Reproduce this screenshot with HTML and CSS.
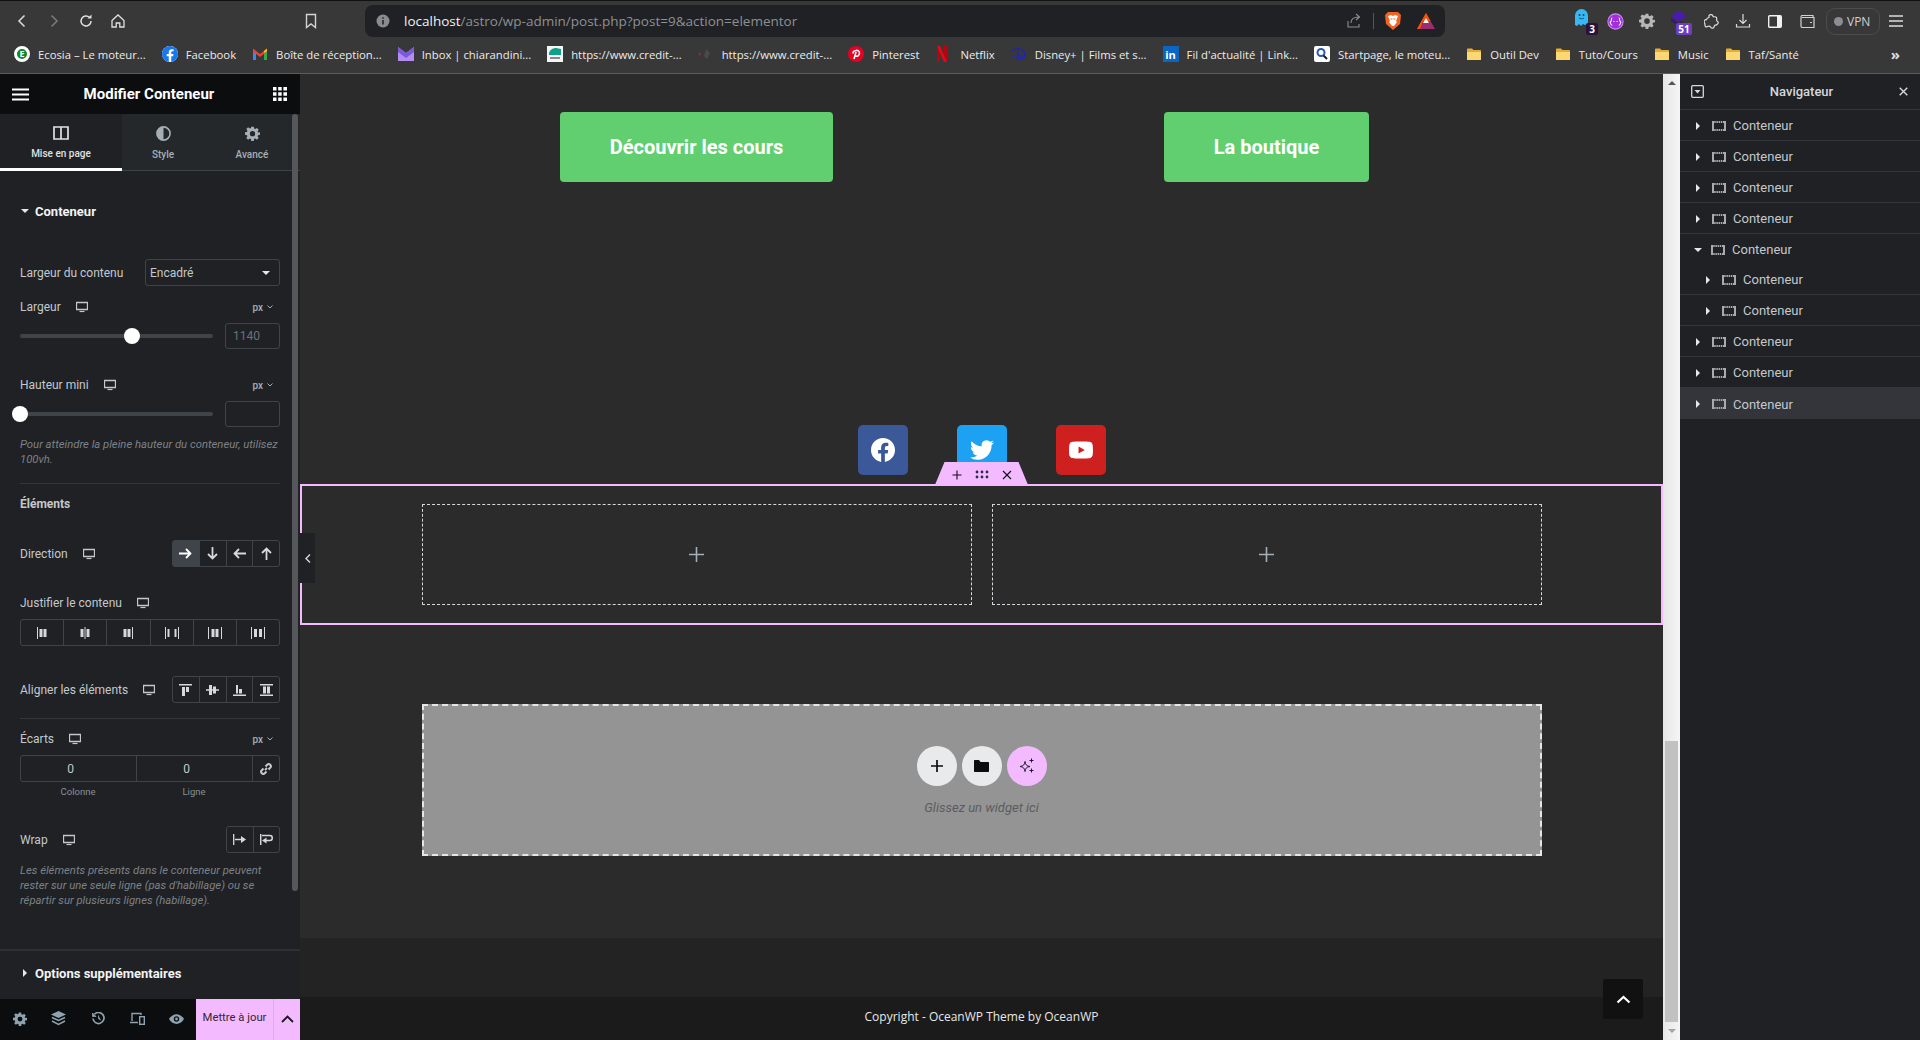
FILE: index.html
```html
<!DOCTYPE html>
<html lang="fr">
<head>
  <meta charset="utf-8">
  <title>Elementor | Modifier Conteneur</title>
  <link rel="stylesheet" href="styles.css">
</head>
<body>
  <svg class="defs" width="0" height="0">
    <symbol id="mon" viewBox="0 0 12 12"><path d="M.5 1.500h11v7h-11z" fill="none" stroke="currentColor" stroke-width="1.300"/><path d="M3.500 10.500h5" stroke="currentColor" stroke-width="1.200"/></symbol>
    <symbol id="box" viewBox="0 0 14 10"><path d="M0 0h2v10H0zM12 0h2v10h-2z" fill="currentColor"/><path d="M0 1h14M0 9h14" stroke="currentColor" stroke-width="2" stroke-dasharray="1.500 .7"/></symbol>
    <symbol id="folder" viewBox="0 0 16 16"><path d="M1 3.500c0-.6.400-1 1-1h4l1.500 1.500H14c.6 0 1 .4 1 1V13c0 .6-.4 1-1 1H2c-.6 0-1-.4-1-1z" fill="#e3ad3c"/><path d="M1 6h14v7c0 .6-.4 1-1 1H2c-.6 0-1-.4-1-1z" fill="#fbd872"/></symbol>
    <symbol id="gear" viewBox="0 0 24 24"><path fill="currentColor" fill-rule="evenodd" d="M10 1h4l.6 3.100 1.800.8 2.700-1.800 2.800 2.800-1.800 2.700.8 1.800L24 10v4l-3.100.6-.8 1.800 1.800 2.700-2.800 2.800-2.700-1.800-1.800.8L14 24h-4l-.6-3.100-1.800-.8-2.700 1.800-2.800-2.800 1.800-2.700-.8-1.800L0 14v-4l3.100-.6.8-1.800L2.100 4.900l2.800-2.800 2.700 1.800 1.800-.8zM12 8a4.200 4.200 0 1 0 0 8.400A4.200 4.200 0 0 0 12 8z"/></symbol>
  </svg>

  <div class="app">
    <header class="toolbar">
      <div class="tb-left">
        <span class="tb-btn"><svg width="16" height="16" viewBox="0 0 16 16"><path d="M10.500 2.500 5 8l5.500 5.500" fill="none" stroke="#dcdcdc" stroke-width="1.500"/></svg></span>
        <span class="tb-btn"><svg width="16" height="16" viewBox="0 0 16 16"><path d="M5.500 2.500 11 8l-5.500 5.500" fill="none" stroke="#7b7b7b" stroke-width="1.500"/></svg></span>
        <span class="tb-btn"><svg width="16" height="16" viewBox="0 0 16 16"><path d="M13 8a5 5 0 1 1-1.600-3.700" fill="none" stroke="#e0e0e0" stroke-width="1.500"/><path d="M13.500 1.500v4h-4z" fill="#e0e0e0"/></svg></span>
        <span class="tb-btn"><svg width="16" height="16" viewBox="0 0 16 16"><path d="M2 7.500 8 2l6 5.500V14H9.800v-4H6.200v4H2z" fill="none" stroke="#e0e0e0" stroke-width="1.300"/></svg></span>
        <span class="tb-btn tb-mark"><svg width="16" height="16" viewBox="0 0 16 16"><path d="M3.500 1.500h9v13L8 11l-4.500 3.500z" fill="none" stroke="#d4d4d4" stroke-width="1.400"/></svg></span>
      </div>
      <div class="urlbar">
        <svg class="url-info" width="14" height="14" viewBox="0 0 14 14"><circle cx="7" cy="7" r="6.500" fill="#8a8b8d"/><path d="M7 6v4.500M7 3.300v1.500" stroke="#202124" stroke-width="1.500"/></svg>
        <span class="url-text"><b>localhost</b>/astro/wp-admin/post.php?post=9&amp;action=elementor</span>
        <svg width="16" height="16" viewBox="0 0 16 16"><path d="M2 8v6h11v-3M5 10c0-4 3-6 8-6M10 1l3.500 3L10 7" fill="none" stroke="#8e8e8e" stroke-width="1.100"/></svg>
        <i class="url-sep"></i>
        <svg class="url-brave" width="18" height="20" viewBox="0 0 18 20"><path d="M4 1h10l3 3-1 9-7 6-7-6-1-9z" fill="#f1641f"/><path d="M4 5l3-1 2 1 2-1 3 1-2 5 1 1-3 4H8l-3-4 1-1z" fill="#fff"/><path d="M6.500 8h2M9.500 8h2" stroke="#f1641f"/></svg>
        <svg class="url-bat" width="18" height="16" viewBox="0 0 18 16"><path d="M9 0l9 16H0z" fill="#9b2d6e"/><path d="M9 0 4.500 8h9z" fill="#ff5000"/><path d="M9 5l3 5H6z" fill="#fff"/><path d="M0 16l4.500-8H6L3 16z" fill="#ff5000"/></svg>
      </div>
      <div class="tb-right">
        <span class="tb-btn ext">
          <svg class="ext-ghost" width="13" height="18" viewBox="0 0 13 18"><path d="M0 6.500a6.500 6.500 0 0 1 13 0V15l-3 1-2-1-2 2-2-2-2 2-2-1z" fill="#35b8f4"/><circle cx="4.500" cy="6" r="1" fill="#143a55"/><circle cx="8.500" cy="6" r="1" fill="#143a55"/><path d="M4 9c1.500 1 3.500 1 5 0" fill="none" stroke="#143a55" stroke-width=".8"/></svg>
          <em class="badge badge-dark">3</em>
        </span>
        <span class="tb-btn"><svg width="17" height="17" viewBox="0 0 16 16"><circle cx="8" cy="8" r="7.200" fill="#a32ee0" stroke="#c98bf0"/><path d="M5 4.500C3.500 4.500 4.500 8 3.500 8s0 3.500 1.500 3.500M11 4.500c1.500 0 .5 3.500 1.500 3.500s0 3.500-1.500 3.500M6 8h1M9 8h1" fill="none" stroke="#fff"/></svg></span>
        <span class="tb-btn gear-grey"><svg width="16" height="16"><use href="#gear"/></svg></span>
        <span class="tb-btn ext">
          <svg class="ext-stack" width="16" height="15" viewBox="0 0 16 15"><path d="M8 0l8 5-8 5-8-5z" fill="#4b19b5"/><path d="M0 7l8 5 3-2v4l-3 1-8-5z" fill="#37138c"/></svg>
          <em class="badge badge-violet">51</em>
        </span>
        <span class="tb-btn"><svg width="15" height="15" viewBox="0 0 15 15"><path d="M5 1.500c1-1.500 4-1 4 1 0 .8 2.800-.5 3.500 1s-.5 3 .5 3.500 2 1.500.5 3.200-2.500.5-3 1.500-.5 3-2.500 2.500-1-2-3-2-2.500 1.500-3.500.3-.3-2.500-.8-3.300-1.500-1.700 0-3 1.700.3 2-1 1.300-1.500 2.300-1.700z" fill="none" stroke="#dcdcdc" stroke-width="1.200"/></svg></span>
        <span class="tb-btn"><svg width="16" height="16" viewBox="0 0 16 16"><path d="M8 1v9M4.500 7 8 10.500 11.500 7M1.500 11v3h13v-3" fill="none" stroke="#dcdcdc" stroke-width="1.200"/></svg></span>
        <span class="tb-btn"><svg width="14" height="13" viewBox="0 0 14 13"><rect x=".7" y=".7" width="12.600" height="11.600" rx="1" fill="none" stroke="#f0f0f0" stroke-width="1.400"/><rect x="9" y="1" width="4" height="11" fill="#f0f0f0"/></svg></span>
        <span class="tb-btn"><svg width="15" height="13" viewBox="0 0 15 13"><path d="M13 2.500v-2H2.500C1.500.5 1 1 1 2v9c0 .8.500 1.500 1.500 1.500H14v-10H2M10 7.500h2" fill="none" stroke="#d2d2d2" stroke-width="1.200"/></svg></span>
        <span class="vpn"><i class="vpn-dot"></i>VPN</span>
        <span class="tb-btn"><svg width="16" height="12" viewBox="0 0 16 12"><path d="M1 1h14M1 6h14M1 11h14" stroke="#dcdcdc" stroke-width="1.300"/></svg></span>
      </div>
    </header>

    <nav class="bookmarks">
      <a class="bm"><span class="fav fav-ecosia">E</span>Ecosia – Le moteur...</a>
      <a class="bm"><svg class="fav" viewBox="0 0 24 24"><circle cx="12" cy="12" r="12" fill="#fff"/><path fill="#1877f2" d="M24 12.073c0-6.627-5.373-12-12-12s-12 5.373-12 12c0 5.990 4.388 10.954 10.125 11.854v-8.385H7.078v-3.470h3.047V9.430c0-3.007 1.792-4.669 4.533-4.669 1.312 0 2.686.235 2.686.235v2.953H15.830c-1.491 0-1.956.925-1.956 1.874v2.250h3.328l-.532 3.470h-2.796v8.385C19.612 23.027 24 18.062 24 12.073z"/></svg>Facebook</a>
      <a class="bm"><svg class="fav" viewBox="0 0 16 16"><path d="M1 3v11h3V7z" fill="#4285f4"/><path d="M15 3v11h-3V7z" fill="#34a853"/><path d="M1 2.500 8 8l7-5.500v3L8 11 1 5.500z" fill="#ea4335"/><path d="M12 5v2l3-1.500v-3z" fill="#fbbc04"/></svg>Boîte de réception...</a>
      <a class="bm"><svg class="fav" viewBox="0 0 16 16"><path d="M0 1l8 6 8-6v14H0z" fill="#b48cf2"/><path d="M0 1l8 6 8-6v5l-8 6-8-6z" fill="#7a5ad8"/></svg>Inbox | chiarandini...</a>
      <a class="bm"><svg class="fav" viewBox="0 0 16 16"><rect width="16" height="16" fill="#f5f5f5"/><path d="M2 8c0-4 4-6 7-6l5 1v6H2z" fill="#0fa08a"/><rect x="3" y="11" width="10" height="2" fill="#8a8a8a"/></svg>https://www.credit-...</a>
      <a class="bm"><svg class="fav" viewBox="0 0 16 16"><path d="M1 6l2 2-2 2z" fill="#c21f2e"/><path d="M8 3l4 4-3 6-3-3z" fill="#4a4a4a"/></svg>https://www.credit-...</a>
      <a class="bm"><svg class="fav" viewBox="0 0 16 16"><circle cx="8" cy="8" r="8" fill="#e60023"/><path d="M6 13 8 6M5 7.500C4.500 4 11.500 3 11.500 7c0 3-3 4-4 2.500" fill="none" stroke="#fff" stroke-width="1.600"/></svg>Pinterest</a>
      <a class="bm bm-netflix"><svg class="fav-nf" viewBox="0 0 10 16"><path d="M0 0h3v16l-3 .3zM7 0h3v16.300L7 16z" fill="#b20710"/><path d="M0 0h3l7 16.300H7z" fill="#e50914"/></svg>Netflix</a>
      <a class="bm"><svg class="fav" viewBox="0 0 16 16"><path d="M1 5c6-5 13-1 13 4 0 3-4 5-8 3M7 5v9M1 10h14" fill="none" stroke="#1c22c4" stroke-width="1.200"/></svg>Disney+ | Films et s...</a>
      <a class="bm"><span class="fav fav-in">in</span>Fil d'actualité | Link...</a>
      <a class="bm"><svg class="fav" viewBox="0 0 16 16"><rect width="16" height="16" rx="2" fill="#fff"/><circle cx="7" cy="6.500" r="3.500" fill="none" stroke="#2959a8" stroke-width="2"/><path d="M9.500 9.500 13 13" stroke="#1a1a1a" stroke-width="2"/></svg>Startpage, le moteu...</a>
      <a class="bm"><svg class="fav"><use href="#folder"/></svg>Outil Dev</a>
      <a class="bm"><svg class="fav"><use href="#folder"/></svg>Tuto/Cours</a>
      <a class="bm"><svg class="fav"><use href="#folder"/></svg>Music</a>
      <a class="bm"><svg class="fav"><use href="#folder"/></svg>Taf/Santé</a>
      <span class="bm-more">»</span>
    </nav>

    <div class="workspace">
      <aside class="panel">
        <div class="panel-head">
          <svg width="17" height="13" viewBox="0 0 17 13"><path d="M0 1.500h17M0 6.500h17M0 11.500h17" stroke="#fff" stroke-width="2"/></svg>
          <h1>Modifier Conteneur</h1>
          <svg width="14" height="14" viewBox="0 0 14 14" fill="#fff"><path d="M0 0h3.500v3.500H0zM5.200 0h3.500v3.500H5.200zM10.400 0H14v3.500h-3.600zM0 5.200h3.500v3.500H0zM5.200 5.200h3.500v3.500H5.200zM10.400 5.200H14v3.500h-3.600zM0 10.400h3.500V14H0zM5.200 10.400h3.500V14H5.200zM10.400 10.400H14V14h-3.600z"/></svg>
        </div>
        <div class="tabs">
          <div class="tab tab-on">
            <svg width="16" height="14" viewBox="0 0 16 14"><path d="M1 1h14v12H1zM8 1v12" fill="none" stroke="currentColor" stroke-width="1.700"/></svg>
            <span>Mise en page</span>
          </div>
          <div class="tab tab-style">
            <svg width="15" height="15" viewBox="0 0 15 15"><circle cx="7.500" cy="7.500" r="6.600" fill="none" stroke="currentColor" stroke-width="1.600"/><path d="M7.500 1a6.500 6.500 0 0 0 0 13z" fill="currentColor"/></svg>
            <span>Style</span>
          </div>
          <div class="tab tab-adv">
            <svg width="15" height="15"><use href="#gear"/></svg>
            <span>Avancé</span>
          </div>
        </div>

        <div class="panel-body">
          <div class="sec-title"><i class="caret-down"></i>Conteneur</div>

          <div class="row row-width">
            <span class="lab">Largeur du contenu</span>
            <span class="select">Encadré<i class="caret-down"></i></span>
          </div>

          <div class="head head-a">
            <span class="lab">Largeur</span>
            <svg class="mon"><use href="#mon"/></svg>
            <span class="unit">px<svg width="6" height="4" viewBox="0 0 6 4"><path d="M.5.500 3 3 5.500.500" fill="none" stroke="currentColor"/></svg></span>
          </div>
          <div class="slider-row">
            <div class="track"><i class="thumb thumb-mid"></i></div>
            <span class="num">1140</span>
          </div>

          <div class="head head-b">
            <span class="lab">Hauteur mini</span>
            <svg class="mon"><use href="#mon"/></svg>
            <span class="unit">px<svg width="6" height="4" viewBox="0 0 6 4"><path d="M.5.500 3 3 5.500.500" fill="none" stroke="currentColor"/></svg></span>
          </div>
          <div class="slider-row">
            <div class="track"><i class="thumb thumb-start"></i></div>
            <span class="num"></span>
          </div>
          <p class="note">Pour atteindre la pleine hauteur du conteneur, utilisez 100vh.</p>

          <hr class="sep sep-a">
          <div class="sub-title">Éléments</div>

          <div class="row row-dir">
            <span class="lab">Direction</span>
            <svg class="mon"><use href="#mon"/></svg>
            <div class="btns btns-4">
              <span class="on"><svg width="13" height="11" viewBox="0 0 13 11"><path d="M0 5.500h11M7 1l4.500 4.500L7 10" fill="none" stroke="currentColor" stroke-width="1.800"/></svg></span>
              <span><svg width="11" height="13" viewBox="0 0 11 13"><path d="M5.500 0v11M1 7l4.500 4.500L10 7" fill="none" stroke="currentColor" stroke-width="1.800"/></svg></span>
              <span><svg width="13" height="11" viewBox="0 0 13 11"><path d="M13 5.500H2M6 1 1.500 5.500 6 10" fill="none" stroke="currentColor" stroke-width="1.800"/></svg></span>
              <span><svg width="11" height="13" viewBox="0 0 11 13"><path d="M5.500 13V2M1 6l4.500-4.500L10 6" fill="none" stroke="currentColor" stroke-width="1.800"/></svg></span>
            </div>
          </div>

          <div class="head head-c">
            <span class="lab">Justifier le contenu</span>
            <svg class="mon"><use href="#mon"/></svg>
          </div>
          <div class="btns btns-6">
            <span><svg width="14" height="12" viewBox="0 0 14 12" fill="currentColor"><path d="M2 0h1v12H2zM4.500 2h3v8h-3zM8.500 2h3v8h-3z"/></svg></span>
            <span><svg width="14" height="12" viewBox="0 0 14 12" fill="currentColor"><path d="M6.500 0h1v12h-1zM2.500 2h3v8h-3zM8.500 2h3v8h-3z"/></svg></span>
            <span><svg width="14" height="12" viewBox="0 0 14 12" fill="currentColor"><path d="M11 0h1v12h-1zM2.500 2h3v8h-3zM6.500 2h3v8h-3z"/></svg></span>
            <span><svg width="14" height="12" viewBox="0 0 14 12" fill="currentColor"><path d="M0 0h1v12H0zM13 0h1v12h-1zM2.500 2h2v8h-2zM9.500 2h2v8h-2z"/></svg></span>
            <span><svg width="14" height="12" viewBox="0 0 14 12" fill="currentColor"><path d="M0 0h1v12H0zM13 0h1v12h-1zM3.500 2h3v8h-3zM7.500 2h3v8h-3z"/></svg></span>
            <span><svg width="14" height="12" viewBox="0 0 14 12" fill="currentColor"><path d="M0 0h1v12H0zM13 0h1v12h-1zM3 2h3v8H3zM8 2h3v8H8z"/></svg></span>
          </div>

          <div class="row row-align">
            <span class="lab">Aligner les éléments</span>
            <svg class="mon"><use href="#mon"/></svg>
            <div class="btns btns-4">
              <span><svg width="13" height="12" viewBox="0 0 13 12" fill="currentColor"><path d="M0 0h13v1.500H0zM3 3h3v9H3zM7 3h3v5H7z"/></svg></span>
              <span><svg width="13" height="12" viewBox="0 0 13 12" fill="currentColor"><path d="M0 5.300h13v1.400H0zM3 1h3v10H3zM7 2.500h3v7H7z"/></svg></span>
              <span><svg width="13" height="12" viewBox="0 0 13 12" fill="currentColor"><path d="M0 10.500h13V12H0zM3 1h2v8.500H3zM6 5h3v4.500H6z"/></svg></span>
              <span><svg width="13" height="12" viewBox="0 0 13 12" fill="currentColor"><path d="M0 0h13v1.500H0zM0 10.500h13V12H0zM3 2.500h3v7H3zM7 2.500h3v7H7z"/></svg></span>
            </div>
          </div>

          <hr class="sep sep-b">
          <div class="head head-d">
            <span class="lab">Écarts</span>
            <svg class="mon"><use href="#mon"/></svg>
            <span class="unit">px<svg width="6" height="4" viewBox="0 0 6 4"><path d="M.5.500 3 3 5.500.500" fill="none" stroke="currentColor"/></svg></span>
          </div>
          <div class="gaps">
            <span>0</span>
            <span>0</span>
            <span class="link"><svg width="12" height="12" viewBox="0 0 12 12"><path d="M5 7 7 5M3.500 5.500 1.800 7.200a2 2 0 0 0 3 3L6.500 8.500M5.500 3.500l1.700-1.700a2 2 0 0 1 3 3L8.500 6.500" fill="none" stroke="currentColor" stroke-width="2"/></svg></span>
          </div>
          <div class="gap-labs"><span>Colonne</span><span>Ligne</span></div>

          <div class="row row-wrap">
            <span class="lab">Wrap</span>
            <svg class="mon"><use href="#mon"/></svg>
            <div class="btns btns-2">
              <span><svg width="13" height="11" viewBox="0 0 13 11" fill="none" stroke="currentColor" stroke-width="1.300"><path d="M.7 0v11M2 5.500h8"/><path d="M8 2l5 3.500L8 9z" fill="currentColor" stroke="none"/></svg></span>
              <span><svg width="13" height="11" viewBox="0 0 13 11" fill="none" stroke="currentColor" stroke-width="1.500"><path d="M.7 0v11M2 1.500h8c3 0 3 5 0 5H5"/><path d="M6.500 3.500 2 6.500l4.500 3z" fill="currentColor" stroke="none"/></svg></span>
            </div>
          </div>
          <p class="note">Les éléments présents dans le conteneur peuvent rester sur une seule ligne (pas d'habillage) ou se répartir sur plusieurs lignes (habillage).</p>

          <hr class="sep-thick">
          <div class="sec-title sec-more"><i class="caret-right"></i>Options supplémentaires</div>
        </div>

        <div class="panel-foot">
          <div class="foot-icons">
            <span><svg width="14" height="14"><use href="#gear"/></svg></span>
            <span><svg width="15" height="15" viewBox="0 0 15 15"><path d="M7.500 0 15 3.500 7.500 7 0 3.500z" fill="currentColor"/><path d="M1 6.500l6.500 3 6.500-3M1 10l6.500 3.500L14 10" fill="none" stroke="currentColor" stroke-width="1.500"/></svg></span>
            <span><svg width="13" height="13" viewBox="0 0 13 13"><path d="M2.500 2.200A5.500 5.500 0 1 1 1 6.500" fill="none" stroke="currentColor" stroke-width="1.700"/><path d="M.5 1v3.500H4zM6.500 3.500v3.200l2.300 1.300" fill="currentColor" stroke="currentColor" stroke-width=".8"/></svg></span>
            <span><svg width="15" height="13" viewBox="0 0 15 13"><path d="M2 9V1.500h9V3M0 10.500h8" fill="none" stroke="currentColor" stroke-width="1.400"/><rect x="9.700" y="4.700" width="4.600" height="7.600" fill="none" stroke="currentColor" stroke-width="1.400"/></svg></span>
            <span><svg width="15" height="10" viewBox="0 0 15 10"><path d="M0 5c4-6.500 11-6.500 15 0-4 6.500-11 6.500-15 0z" fill="currentColor"/><circle cx="7.500" cy="5" r="2.700" fill="#0c0d0e"/><circle cx="7.500" cy="5" r="1.400" fill="currentColor"/></svg></span>
          </div>
          <span class="save">Mettre à jour</span>
          <span class="save-more"><svg width="13" height="8" viewBox="0 0 13 8"><path d="M1 7l5.500-5.500L12 7" fill="none" stroke="#1b1b1b" stroke-width="1.800"/></svg></span>
        </div>
        <i class="panel-scroll"></i>
      </aside>

      <main class="canvas">
        <span class="collapse"><svg width="6" height="9" viewBox="0 0 6 9"><path d="M5 .5 1 4.500l4 4" fill="none" stroke="#d5d8dc" stroke-width="1.400"/></svg></span>
        <div class="page">
          <section class="cols cta">
            <div class="col"><a class="cta-btn cta-one">Découvrir les cours</a></div>
            <div class="col"><a class="cta-btn cta-two">La boutique</a></div>
          </section>

          <section class="socials">
            <a class="soc soc-fb"><svg width="24" height="24" viewBox="0 0 24 24"><path fill="#fff" d="M24 12.073c0-6.627-5.373-12-12-12s-12 5.373-12 12c0 5.990 4.388 10.954 10.125 11.854v-8.385H7.078v-3.470h3.047V9.430c0-3.007 1.792-4.669 4.533-4.669 1.312 0 2.686.235 2.686.235v2.953H15.830c-1.491 0-1.956.925-1.956 1.874v2.250h3.328l-.532 3.470h-2.796v8.385C19.612 23.027 24 18.062 24 12.073z"/></svg></a>
            <a class="soc soc-tw"><svg width="24" height="24" viewBox="0 0 24 24"><path fill="#fff" d="M23.953 4.570a10 10 0 01-2.825.775 4.958 4.958 0 002.163-2.723c-.951.555-2.005.959-3.127 1.184a4.920 4.920 0 00-8.384 4.482C7.690 8.095 4.067 6.130 1.640 3.162a4.822 4.822 0 00-.666 2.475c0 1.710.870 3.213 2.188 4.096a4.904 4.904 0 01-2.228-.616v.060a4.923 4.923 0 003.946 4.827 4.996 4.996 0 01-2.212.085 4.936 4.936 0 004.604 3.417 9.867 9.867 0 01-6.102 2.105c-.390 0-.779-.023-1.170-.067a13.995 13.995 0 007.557 2.209c9.053 0 13.998-7.496 13.998-13.985 0-.210 0-.420-.015-.630A9.935 9.935 0 0024 4.590z"/></svg></a>
            <a class="soc soc-yt"><svg width="24" height="24" viewBox="0 0 24 24"><path fill="#fff" fill-rule="evenodd" d="M23.498 6.186a3.016 3.016 0 0 0-2.122-2.136C19.505 3.545 12 3.545 12 3.545s-7.505 0-9.377.505A3.017 3.017 0 0 0 .502 6.186C0 8.070 0 12 0 12s0 3.930.502 5.814a3.016 3.016 0 0 0 2.122 2.136c1.871.505 9.376.505 9.376.505s7.505 0 9.377-.505a3.015 3.015 0 0 0 2.122-2.136C24 15.930 24 12 24 12s0-3.930-.502-5.814zM9.545 15.568V8.432L15.818 12l-6.273 3.568z"/></svg></a>
          </section>

          <section class="selected">
            <div class="handle">
              <svg width="10" height="10" viewBox="0 0 10 10"><path d="M5 .5v9M.5 5h9" stroke="#111" stroke-width="1.100"/></svg>
              <svg width="14" height="9" viewBox="0 0 14 9" fill="#2b2b4a"><circle cx="2" cy="2" r="1.400"/><circle cx="7" cy="2" r="1.400"/><circle cx="12" cy="2" r="1.400"/><circle cx="2" cy="7" r="1.400"/><circle cx="7" cy="7" r="1.400"/><circle cx="12" cy="7" r="1.400"/></svg>
              <svg width="10" height="10" viewBox="0 0 10 10"><path d="M1 1l8 8M9 1 1 9" stroke="#111" stroke-width="1.100"/></svg>
            </div>
            <div class="cols">
              <div class="empty"><svg width="15" height="15" viewBox="0 0 15 15"><path d="M7.500 0v15M0 7.500h15" stroke="#a4afb7" stroke-width="1.600"/></svg></div>
              <div class="empty"><svg width="15" height="15" viewBox="0 0 15 15"><path d="M7.500 0v15M0 7.500h15" stroke="#a4afb7" stroke-width="1.600"/></svg></div>
            </div>
          </section>

          <section class="dropzone">
            <div class="drop-btns">
              <span class="round"><svg width="12" height="12" viewBox="0 0 12 12"><path d="M6 0v12M0 6h12" stroke="#0c0d0e" stroke-width="1.700"/></svg></span>
              <span class="round"><svg width="15" height="12" viewBox="0 0 15 12"><path d="M0 1c0-.6.400-1 1-1h4l1.500 2H14c.6 0 1 .4 1 1v8c0 .6-.4 1-1 1H1c-.6 0-1-.4-1-1z" fill="#0c0d0e"/></svg></span>
              <span class="round round-ai"><svg width="16" height="16" viewBox="0 0 16 16"><path d="M6 3.500C6.600 7 7.500 8 11 8.500 7.500 9 6.600 10 6 13.500 5.400 10 4.500 9 1 8.500 4.500 8 5.400 7 6 3.500z" fill="none" stroke="#1b1b2b"/><path d="M12.500 .5v4M10.500 2.500h4M12.500 10.500v4M10.500 12.500h4" stroke="#1b1b2b"/></svg></span>
            </div>
            <p class="drop-text">Glissez un widget ici</p>
          </section>
        </div>

        <div class="strip"></div>
        <footer class="site-foot">Copyright - OceanWP Theme by OceanWP</footer>
        <a class="to-top"><svg width="15" height="9" viewBox="0 0 15 9"><path d="M1.500 7.500 7.500 2l6 5.500" fill="none" stroke="#fff" stroke-width="2.200"/></svg></a>
      </main>

      <div class="scrollbar">
        <span class="sb-arrow"><i class="sb-up"></i></span>
        <span class="sb-track"></span>
        <span class="sb-thumb"></span>
        <span class="sb-arrow"><i class="sb-down"></i></span>
      </div>

      <aside class="navigator">
        <div class="nav-head">
          <svg width="13" height="13" viewBox="0 0 13 13"><rect x=".7" y=".7" width="11.600" height="11.600" rx="1" fill="none" stroke="#d5d8dc" stroke-width="1.300"/><path d="M3.500 5h6l-3 3.500z" fill="#d5d8dc"/></svg>
          <h2>Navigateur</h2>
          <svg width="9" height="9" viewBox="0 0 9 9"><path d="M.7.700l7.600 7.600M8.300.700.700 8.300" stroke="#d5d8dc" stroke-width="1.400"/></svg>
        </div>
        <div class="nav-item"><i class="caret-right"></i><svg class="nav-box"><use href="#box"/></svg>Conteneur</div>
        <div class="nav-item"><i class="caret-right"></i><svg class="nav-box"><use href="#box"/></svg>Conteneur</div>
        <div class="nav-item"><i class="caret-right"></i><svg class="nav-box"><use href="#box"/></svg>Conteneur</div>
        <div class="nav-item"><i class="caret-right"></i><svg class="nav-box"><use href="#box"/></svg>Conteneur</div>
        <div class="nav-item nav-open"><i class="caret-down"></i><svg class="nav-box"><use href="#box"/></svg>Conteneur</div>
        <div class="nav-item nav-sub"><i class="caret-right"></i><svg class="nav-box"><use href="#box"/></svg>Conteneur</div>
        <div class="nav-item nav-sub"><i class="caret-right"></i><svg class="nav-box"><use href="#box"/></svg>Conteneur</div>
        <div class="nav-item"><i class="caret-right"></i><svg class="nav-box"><use href="#box"/></svg>Conteneur</div>
        <div class="nav-item"><i class="caret-right"></i><svg class="nav-box"><use href="#box"/></svg>Conteneur</div>
        <div class="nav-item nav-hover"><i class="caret-right"></i><svg class="nav-box"><use href="#box"/></svg>Conteneur</div>
      </aside>
    </div>
  </div>
</body>
</html>
```

FILE: styles.css
```css
* {
  box-sizing: border-box;
}
html, body {
  height: 100%;
}
body {
  margin: 0;
  overflow: hidden;
  background-color: #2b2b2b;
  font-family: Roboto, "Liberation Sans", sans-serif;
  font-size: 12px;
  color: #d5d8dc;
}
.defs {
  position: absolute;
}
svg {
  display: block;
  flex: none;
}
.app {
  display: flex;
  flex-direction: column;
  width: 1920px;
  height: 1040px;
}

/* browser toolbar */
.toolbar {
  display: flex;
  align-items: center;
  height: 39px;
  padding-top: 2px;
  border-top: 1px solid #111;
  background-color: #383838;
}
.tb-left {
  display: flex;
  width: 365px;
  padding-left: 6px;
}
.tb-btn {
  position: relative;
  display: flex;
  align-items: center;
  justify-content: center;
  width: 32px;
  height: 28px;
}
.tb-mark {
  margin-left: 161px;
}
.urlbar {
  display: flex;
  align-items: center;
  width: 1080px;
  height: 32px;
  padding: 0 10px 0 10px;
  border-radius: 8px;
  background-color: #202124;
}
.url-info {
  margin: 0 14px 0 1px;
}
.url-text {
  flex: 1;
  font-family: "Open Sans", sans-serif;
  font-size: 13.5px;
  color: #8f9093;
}
.url-text b {
  font-weight: 400;
  color: #f1f1f1;
}
.url-sep {
  width: 1px;
  height: 16px;
  margin: 0 10px 0 11px;
  background-color: #55565a;
}
.url-bat {
  margin-left: 15px;
}
.tb-right {
  display: flex;
  align-items: center;
  margin-left: 122px;
}
.gear-grey {
  color: #b7b7b7;
}
.ext-ghost {
  margin: -6px 3px 0 0;
}
.ext-stack {
  margin-top: -6px;
}
.badge {
  position: absolute;
  top: 16px;
  height: 12px;
  border-radius: 2px;
  font-family: "Open Sans", sans-serif;
  font-size: 10px;
  font-style: normal;
  font-weight: 700;
  line-height: 12px;
  text-align: center;
  color: #fff;
}
.badge-dark {
  left: 19px;
  width: 12px;
  background-color: #2c1238;
}
.badge-violet {
  left: 13px;
  width: 16px;
  background-color: #6b3fc4;
}
.vpn {
  display: flex;
  align-items: center;
  width: 54px;
  height: 27px;
  margin-left: 3px;
  padding-left: 7px;
  border: 1px solid #4c4c4c;
  border-radius: 9px;
  font-family: "Open Sans", sans-serif;
  font-size: 12px;
  color: #cfcfcf;
}
.vpn-dot {
  width: 9px;
  height: 9px;
  margin-right: 4px;
  border-radius: 50%;
  background-color: #8c8e94;
}

/* bookmarks */
.bookmarks {
  display: flex;
  align-items: center;
  gap: 16px;
  height: 35px;
  padding: 0 20px 4px 14px;
  border-bottom: 1px solid #5c5c5c;
  background-color: #383838;
  font-family: "Open Sans", sans-serif;
  font-size: 11.3px;
  color: #ececec;
  white-space: nowrap;
}
.bm {
  display: flex;
  align-items: center;
  gap: 8px;
}
.fav {
  display: block;
  flex: none;
  width: 16px;
  height: 16px;
}
.fav-ecosia {
  border: 3px solid #fff;
  border-radius: 50%;
  background-color: #12872b;
  font-size: 9px;
  font-weight: 700;
  line-height: 10px;
  text-align: center;
  color: #fff;
}
.fav-in {
  background-color: #0a66c2;
  font-size: 11px;
  font-weight: 700;
  line-height: 18px;
  text-align: center;
  color: #fff;
}
.fav-nf {
  width: 10px;
  height: 16px;
  margin-right: 5px;
}
.bm-netflix {
  margin-left: 2px;
}
.bm-more {
  margin-left: auto;
  font-size: 15px;
  font-weight: 700;
  color: #e0e0e0;
}

/* layout */
.workspace {
  display: flex;
  flex: 1;
  min-height: 0;
}

/* editor panel */
.panel {
  position: relative;
  display: flex;
  flex-direction: column;
  flex: none;
  width: 300px;
  background-color: #1f2124;
}
.panel-head {
  display: flex;
  align-items: center;
  justify-content: space-between;
  height: 40px;
  padding: 0 13px 0 12px;
  background-color: #0c0d0e;
}
.panel-head h1 {
  margin: 0 4px 0 0;
  font-size: 15px;
  font-weight: 700;
  color: #fff;
}
.tabs {
  display: flex;
  height: 57px;
  border-bottom: 1px solid #3f444b;
}
.tab {
  display: flex;
  flex-direction: column;
  align-items: center;
  gap: 8px;
  padding-top: 12px;
  font-size: 10px;
  font-weight: 500;
  color: #a4afb7;
  background-color: #25282b;
}
.tab-on {
  width: 122px;
  height: 57px;
  border-bottom: 3px solid #fff;
  background-color: #1f2124;
  color: #e0e1e3;
}
.tab-style {
  width: 82px;
}
.tab-adv {
  flex: 1;
}
.panel-body {
  flex: 1;
  min-height: 0;
  padding: 0 20px;
  overflow: hidden;
}
.sec-title {
  display: flex;
  align-items: center;
  height: 20px;
  margin-top: 30px;
  font-size: 13px;
  font-weight: 700;
  color: #f2f3f4;
}
.sec-title .caret-down {
  margin-right: 6px;
  margin-left: 1px;
}
.sec-more {
  margin-top: 12px;
}
.sec-more .caret-right {
  margin-right: 8px;
  margin-left: 3px;
}
.caret-down {
  display: block;
  flex: none;
  width: 0;
  height: 0;
  border-top: 4px solid #e6e8ea;
  border-right: 4px solid transparent;
  border-left: 4px solid transparent;
}
.caret-right {
  display: block;
  flex: none;
  width: 0;
  height: 0;
  border-top: 4px solid transparent;
  border-bottom: 4px solid transparent;
  border-left: 4px solid #e6e8ea;
}
.lab {
  white-space: nowrap;
  color: #c3c8cd;
}
.row {
  display: flex;
  align-items: center;
  height: 27px;
}
.row-width {
  justify-content: space-between;
  margin-top: 38px;
}
.row-dir {
  margin-top: 28px;
}
.row-align {
  margin-top: 30px;
}
.row-wrap {
  margin-top: 27px;
}
.row .btns {
  margin-left: auto;
}
.select {
  display: flex;
  align-items: center;
  justify-content: space-between;
  width: 135px;
  height: 27px;
  padding: 0 9px 0 4px;
  border: 1px solid #3f444b;
  border-radius: 3px;
  color: #c3c8cd;
}
.head {
  display: flex;
  align-items: center;
  height: 16px;
}
.head-a {
  margin-top: 13px;
}
.head-b {
  margin-top: 28px;
}
.head-c {
  margin-top: 28px;
}
.head-d {
  margin-top: 12px;
}
.mon {
  width: 12px;
  height: 12px;
  margin-left: 15px;
  color: #c3c8cd;
}
.unit {
  display: flex;
  align-items: center;
  gap: 4px;
  margin-left: auto;
  padding-right: 7px;
  font-size: 10px;
  font-weight: 500;
  color: #a4afb7;
}
.slider-row {
  display: flex;
  align-items: center;
  justify-content: space-between;
  height: 26px;
  margin-top: 8px;
}
.track {
  position: relative;
  width: 193px;
  height: 4px;
  border-radius: 2px;
  background-color: #3f444b;
}
.thumb {
  position: absolute;
  top: -6px;
  width: 16px;
  height: 16px;
  border-radius: 50%;
  background-color: #fff;
}
.thumb-mid {
  left: 104px;
}
.thumb-start {
  left: -8px;
}
.num {
  width: 55px;
  height: 26px;
  padding-left: 7px;
  border: 1px solid #3f444b;
  border-radius: 3px;
  line-height: 24px;
  color: #6d7278;
}
.note {
  margin: 10px -4px 0 0;
  font-size: 11.3px;
  font-style: italic;
  line-height: 15px;
  color: #7d8288;
}
.sep {
  height: 1px;
  margin: 0;
  border: 0;
  background-color: #33363b;
}
.sep-a {
  margin-top: 16px;
}
.sep-b {
  margin-top: 15px;
}
.sub-title {
  height: 16px;
  margin-top: 12px;
  font-weight: 700;
  line-height: 16px;
  color: #c3c8cd;
}
.sep-thick {
  height: 2px;
  margin: 41px -20px 0;
  border: 0;
  background-color: #2d2f33;
}
.btns {
  display: flex;
  height: 27px;
  border: 1px solid #3f444b;
  border-radius: 3px;
  color: #d5d8dc;
}
.btns span {
  display: flex;
  flex: 1;
  align-items: center;
  justify-content: center;
  border-left: 1px solid #3f444b;
}
.btns span:first-child {
  border-left: 0;
}
.btns .on {
  background-color: #3f444b;
  color: #fff;
}
.btns-4 {
  width: 108px;
}
.btns-2 {
  width: 54px;
}
.btns-6 {
  margin-top: 8px;
}
.gaps {
  display: flex;
  height: 27px;
  margin-top: 8px;
  border: 1px solid #3f444b;
  border-radius: 3px;
  color: #c3c8cd;
}
.gaps span {
  display: flex;
  align-items: center;
  justify-content: center;
  width: 116px;
  padding-right: 16px;
  border-right: 1px solid #3f444b;
}
.gaps .link {
  flex: 1;
  padding: 0;
  border: 0;
}
.gap-labs {
  display: flex;
  height: 14px;
  margin-top: 3px;
  font-size: 9.5px;
  line-height: 14px;
  color: #8a9097;
}
.gap-labs span {
  width: 116px;
  text-align: center;
}

/* panel footer */
.panel-foot {
  display: flex;
  flex: none;
  height: 41px;
  background-color: #0c0d0e;
}
.foot-icons {
  display: flex;
  width: 196px;
  padding-bottom: 2px;
  color: #8fa2b0;
}
.foot-icons span {
  display: flex;
  flex: 1;
  align-items: center;
  justify-content: center;
}
.save {
  width: 77px;
  font-size: 11.3px;
  line-height: 38px;
  text-align: center;
  color: #33262f;
  background-color: #f3baff;
}
.save-more {
  display: flex;
  flex: 1;
  align-items: center;
  justify-content: center;
  padding-bottom: 2px;
  border-left: 1px solid #e2a8ee;
  background-color: #f3baff;
}
.panel-scroll {
  position: absolute;
  top: 40px;
  right: 2px;
  width: 6px;
  height: 777px;
  border-radius: 3px;
  background-color: #55575a;
}

/* canvas */
.canvas {
  position: relative;
  display: flex;
  flex-direction: column;
  flex: none;
  width: 1363px;
  background-color: #2b2b2b;
}
.page {
  flex: 1;
}
.cols {
  display: grid;
  grid-template-columns: 1fr 1fr;
  gap: 20px;
  width: 1120px;
  margin: 0 auto;
}
.cta {
  padding-top: 38px;
}
.col {
  display: flex;
  justify-content: center;
}
.cta-btn {
  height: 70px;
  border-radius: 4px;
  font-size: 20px;
  font-weight: 700;
  line-height: 70px;
  text-align: center;
  color: #fff;
  background-color: #61ce70;
}
.cta-one {
  width: 273px;
}
.cta-two {
  width: 205px;
}
.socials {
  display: flex;
  justify-content: center;
  gap: 49px;
  margin-top: 243px;
}
.soc {
  display: flex;
  align-items: center;
  justify-content: center;
  width: 50px;
  height: 50px;
  border-radius: 5px;
}
.soc-fb {
  background-color: #3b5998;
}
.soc-tw {
  background-color: #1da1f2;
}
.soc-yt {
  background-color: #cd201f;
}
.selected {
  position: relative;
  height: 141px;
  margin-top: 9px;
  padding-top: 18px;
  border: 2px solid #f3baff;
}
.handle {
  position: absolute;
  top: -24px;
  left: 50%;
  display: flex;
  align-items: center;
  justify-content: center;
  gap: 13px;
  width: 94px;
  height: 24px;
  margin-left: -47px;
  padding-top: 1px;
  background-color: #f3baff;
  clip-path: polygon(10px 0, 84px 0, 94px 100%, 0 100%);
}
.empty {
  display: flex;
  align-items: center;
  justify-content: center;
  height: 101px;
  border: 1px dashed #d5d8dc;
}
.dropzone {
  display: flex;
  flex-direction: column;
  align-items: center;
  width: 1120px;
  height: 152px;
  margin: 79px auto 0;
  padding-top: 40px;
  border: 2px dashed #e6e6e6;
  background-color: #949494;
}
.drop-btns {
  display: flex;
  gap: 5px;
}
.round {
  display: flex;
  align-items: center;
  justify-content: center;
  width: 40px;
  height: 40px;
  border-radius: 50%;
  background-color: #e9eaec;
}
.round-ai {
  background-color: #f3baff;
}
.drop-text {
  margin: 14px 0 0;
  font-size: 13px;
  font-style: italic;
  color: #5a5c60;
}
.strip {
  flex: none;
  height: 59px;
  background-color: #232323;
}
.site-foot {
  flex: none;
  height: 43px;
  font-family: "Open Sans", sans-serif;
  font-size: 12px;
  line-height: 40px;
  text-align: center;
  color: #e8e8e8;
  background-color: #1b1b1b;
}
.to-top {
  position: absolute;
  right: 20px;
  bottom: 21px;
  display: flex;
  align-items: center;
  justify-content: center;
  width: 40px;
  height: 40px;
  border-radius: 2px;
  background-color: #111;
}
.collapse {
  position: absolute;
  top: 459px;
  left: 0;
  z-index: 1;
  display: flex;
  align-items: center;
  justify-content: center;
  width: 15px;
  height: 50px;
  background-color: #1f2124;
}

/* page scrollbar */
.scrollbar {
  display: flex;
  flex-direction: column;
  flex: none;
  width: 17px;
  background-color: #f1f1f1;
  background-image: linear-gradient(90deg, #e6e6e6, #f5f5f5);
}
.sb-arrow {
  display: flex;
  align-items: center;
  justify-content: center;
  flex: none;
  height: 18px;
}
.sb-up {
  width: 0;
  height: 0;
  border-right: 4px solid transparent;
  border-bottom: 4px solid #555;
  border-left: 4px solid transparent;
}
.sb-down {
  width: 0;
  height: 0;
  border-top: 4px solid #a3a3a3;
  border-right: 4px solid transparent;
  border-left: 4px solid transparent;
}
.sb-track {
  flex: 1;
}
.sb-thumb {
  flex: none;
  height: 281px;
  margin: 0 2px;
  background-color: #c1c1c1;
}

/* navigator */
.navigator {
  flex: 1;
  background-color: #202124;
}
.nav-head {
  display: flex;
  align-items: center;
  justify-content: space-between;
  height: 36px;
  padding: 0 12px 0 11px;
  border-bottom: 1px solid #33363b;
}
.nav-head h2 {
  margin: 0;
  font-size: 13px;
  font-weight: 500;
  color: #d5d8dc;
}
.nav-item {
  display: flex;
  align-items: center;
  height: 31px;
  padding: 1px 0 0 15px;
  border-bottom: 1px solid #33363b;
  font-size: 13px;
  color: #c3c8cd;
}
.nav-item .caret-right {
  margin-left: 1px;
}
.nav-item .caret-down {
  margin-right: -3px;
  margin-left: -1px;
}
.nav-open {
  height: 30px;
  border-bottom: 0;
}
.nav-sub {
  padding-left: 25px;
}
.nav-box {
  width: 14px;
  height: 10px;
  margin: 0 7px 0 12px;
  color: #a7abb0;
}
.nav-hover {
  background-color: #33353a;
  border-bottom: 0;
}
```
